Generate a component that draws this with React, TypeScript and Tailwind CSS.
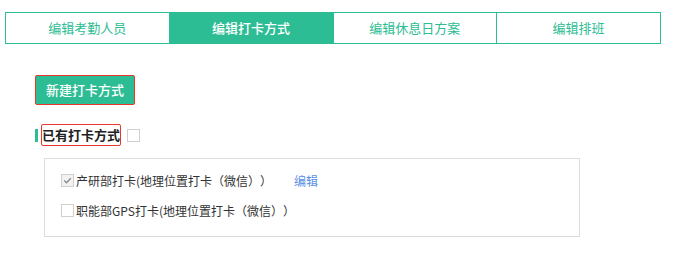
import { useState } from 'react';

const tabs = ['编辑考勤人员', '编辑打卡方式', '编辑休息日方案', '编辑排班'];

const methods = [
  { id: 'a', name: '产研部打卡(地理位置打卡（微信））', checked: true, editable: true },
  { id: 'b', name: '职能部GPS打卡(地理位置打卡（微信））', checked: false, editable: false },
];

function Check({ checked }: { checked: boolean }) {
  return (
    <span
      className={`w-[13px] h-[13px] border border-[#cfcfcf] flex items-center justify-center shrink-0 ${
        checked ? 'bg-[#f2f2f2]' : 'bg-white'
      }`}
    >
      {checked && (
        <svg width="9" height="9" viewBox="0 0 9 9">
          <path d="M1.2 4.6 L3.5 6.8 L7.8 2.2" fill="none" stroke="#8c8c8c" strokeWidth="1.4" />
        </svg>
      )}
    </span>
  );
}

export default function App() {
  const [active] = useState(1);

  return (
    <div
      className="w-[690px] h-[265px] bg-white pt-3 px-[5px] [text-spacing-trim:space-all] [font-feature-settings:'chws'_0]"
      style={{ fontFamily: '"Noto Sans CJK SC", "Noto Sans", sans-serif' }}
    >
      <div className="flex w-[656px] h-[32px] border border-[#2dbd94]">
        {tabs.map((t, i) => (
          <div
            key={t}
            className={`flex-1 flex items-center justify-center text-[13px] ${
              i > 0 ? 'border-l border-[#2dbd94]' : ''
            } ${i === active ? 'bg-[#2dbd94] text-white font-medium' : 'text-[#2dbd94]'}`}
          >
            {t}
          </div>
        ))}
      </div>

      <div className="pl-[30px] pt-[31px]">
        <button className="w-[100px] h-[30px] bg-[#2dbd94] border border-[#e8372b] rounded-[2px] text-white text-[13px] font-medium">
          新建打卡方式
        </button>

        <div className="flex items-center mt-[19px] h-[22px]">
          <span className="w-[3px] h-[13px] bg-[#2dbd94]" />
          <span className="ml-[3px] h-[22px] border border-[#e8372b] rounded-[2px] flex items-center whitespace-nowrap text-[13px] font-bold text-[#222]">
            已有打卡方式
          </span>
          <span className="ml-[6px]">
            <Check checked={false} />
          </span>
        </div>

        <div className="ml-[9px] mt-[12px] w-[536px] h-[79px] border border-[#dcdcdc] pl-4 pt-[15px] flex flex-col gap-[17px]">
          {methods.map((m) => (
            <div key={m.id} className="flex items-center h-[13px] text-[12px] text-[#333]">
              <Check checked={m.checked} />
              <span className="ml-[2px] whitespace-nowrap">{m.name}</span>
              {m.editable && <span className="ml-[22px] text-[#5a8fe6]">编辑</span>}
            </div>
          ))}
        </div>
      </div>
    </div>
  );
}
